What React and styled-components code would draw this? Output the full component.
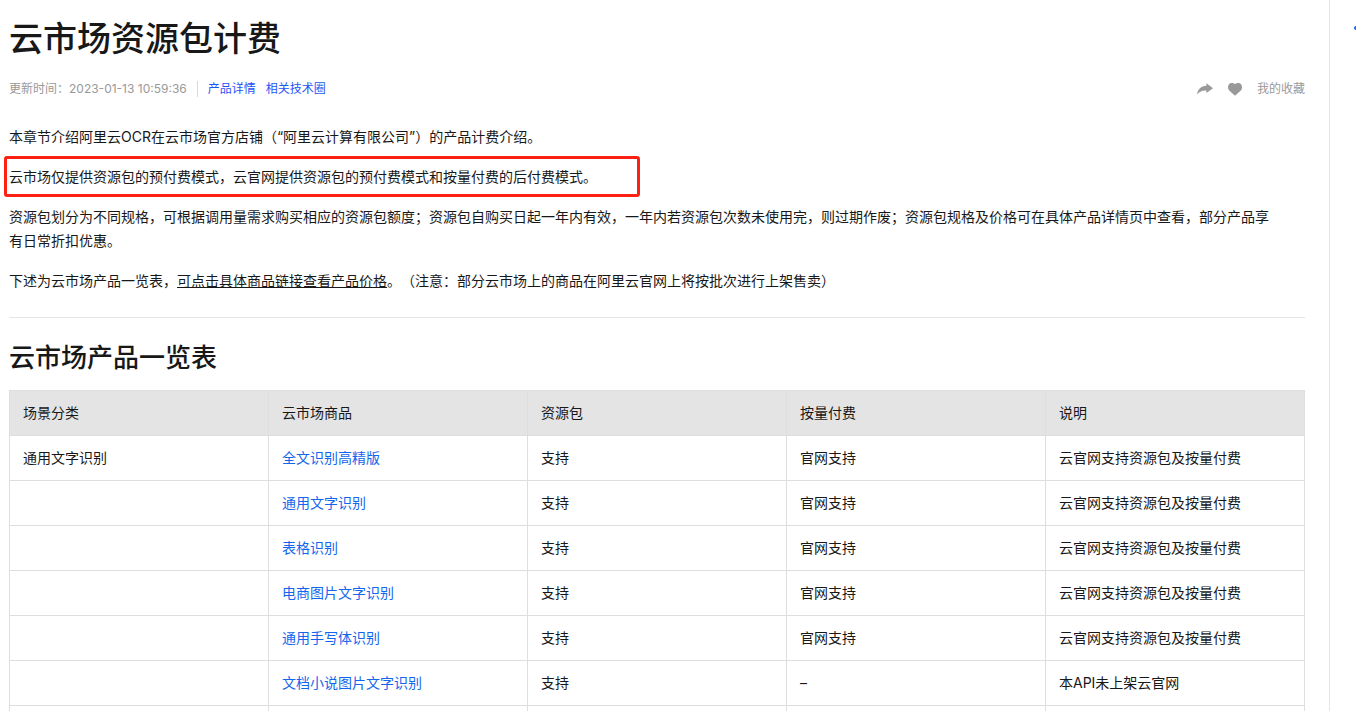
import React from "react";
import { createGlobalStyle, styled } from "styled-components";

const GlobalStyle = createGlobalStyle`
  *,
  *::after {
    box-sizing: border-box;
  }
  body {
    margin: 0;
    background-color: #fff;
    color: #181818;
    font-family: Inter, "Noto Sans CJK SC", sans-serif;
    font-size: 14px;
    line-height: 24px;
    text-spacing-trim: space-all;
  }
`;

const Page = styled.div`
  display: flex;
  height: 100vh;
  overflow: hidden;
`;

const Main = styled.main`
  flex: 1;
  min-width: 0;
  padding: 15px 24px 0 9px;
`;

const SideBar = styled.aside`
  display: flex;
  flex-shrink: 0;
  width: 27px;
  padding: 26px 0 0 24px;
  border-left: 1px solid #e5e5e5;
  overflow: hidden;
`;

const SideDot = styled.span`
  flex-shrink: 0;
  width: 4px;
  height: 4px;
  border-radius: 50%;
  background-color: #1366ec;
`;

const Title = styled.h1`
  margin: 0 0 14px;
  font-size: 34px;
  font-weight: 500;
  line-height: 48px;
`;

const MetaRow = styled.div`
  display: flex;
  justify-content: space-between;
  align-items: center;
  height: 24px;
  margin-bottom: 24px;
  color: #999;
  font-size: 12px;
`;

const MetaGroup = styled.div`
  display: flex;
  align-items: center;
  gap: ${(props) => props.$gap}px;
`;

const MetaDivider = styled.span`
  width: 1px;
  height: 16px;
  background-color: #d9d9d9;
`;

const Link = styled.a`
  color: ${(props) => props.$color || "#1366ec"};
  text-decoration: none;
`;

const IconButton = styled.button`
  display: flex;
  align-items: center;
  gap: 15px;
  padding: 0;
  border: 0;
  background: none;
  color: #999;
  font: inherit;
  cursor: pointer;
`;

const Paragraph = styled.p`
  margin: 0 0 16px;
`;

const MarkedParagraph = styled(Paragraph)`
  position: relative;
  &::after {
    content: "";
    position: absolute;
    top: -9px;
    bottom: -8px;
    left: -5px;
    width: 636px;
    border: 3px solid #ff2014;
    border-radius: 3px;
  }
`;

const Line = styled.hr`
  height: 1px;
  margin: 24px 0 20px;
  border: 0;
  background-color: #e5e5e5;
`;

const SubTitle = styled.h2`
  margin: 0 0 12px;
  font-size: 26px;
  font-weight: 500;
  line-height: 40px;
`;

const ProductTable = styled.table`
  width: 100%;
  border-collapse: collapse;
  table-layout: fixed;
  th,
  td {
    height: 45px;
    padding: 10px 13px;
    border: 1px solid #dedede;
    font-weight: 400;
    text-align: left;
  }
  th {
    background-color: #e4e4e4;
  }
`;

const columns = ["场景分类", "云市场商品", "资源包", "按量付费", "说明"];

const both = "云官网支持资源包及按量付费";

const products = [
  ["通用文字识别", "全文识别高精版", "支持", "官网支持", both],
  ["", "通用文字识别", "支持", "官网支持", both],
  ["", "表格识别", "支持", "官网支持", both],
  ["", "电商图片文字识别", "支持", "官网支持", both],
  ["", "通用手写体识别", "支持", "官网支持", both],
  ["", "文档小说图片文字识别", "支持", "–", "本API未上架云官网"],
  ["", "", "", "", ""],
];

const ShareIcon = () => (
  <svg width="16" height="12" viewBox="0 0 16 12" fill="currentColor">
    <path d="M9.4 0.2 16 5.2 9.4 10V7.4C5.4 7.2 2.4 8.2 0 11.4 0.8 6.4 4 3.2 9.4 2.8Z" />
  </svg>
);

const HeartIcon = () => (
  <svg width="14" height="13" viewBox="0 0 14 13" fill="currentColor">
    <path d="M7 12.8 1.2 7.6C-0.4 5.8-0.4 2.6 1.2 1 2.9-0.5 5.6-0.4 7 1.2 8.4-0.4 11.1-0.5 12.8 1 14.4 2.6 14.4 5.8 12.8 7.6Z" />
  </svg>
);

export default function App() {
  return (
    <>
      <GlobalStyle />
      <Page>
        <Main>
          <Title>云市场资源包计费</Title>
          <MetaRow>
            <MetaGroup $gap={10}>
              <span>更新时间：2023-01-13 10:59:36</span>
              <MetaDivider />
              <Link href="#detail" $color="#1f54f5">
                产品详情
              </Link>
              <Link href="#community" $color="#1f54f5">
                相关技术圈
              </Link>
            </MetaGroup>
            <MetaGroup $gap={15}>
              <IconButton type="button" aria-label="分享">
                <ShareIcon />
              </IconButton>
              <IconButton type="button">
                <HeartIcon />
                我的收藏
              </IconButton>
            </MetaGroup>
          </MetaRow>

          <Paragraph>
            本章节介绍阿里云OCR在云市场官方店铺（“阿里云计算有限公司”）的产品计费介绍。
          </Paragraph>
          <MarkedParagraph>
            云市场仅提供资源包的预付费模式，云官网提供资源包的预付费模式和按量付费的后付费模式。
          </MarkedParagraph>
          <Paragraph>
            资源包划分为不同规格，可根据调用量需求购买相应的资源包额度；资源包自购买日起一年内有效，一年内若资源包次数未使用完，则过期作废；资源包规格及价格可在具体产品详情页中查看，部分产品享
            <br />
            有日常折扣优惠。
          </Paragraph>
          <Paragraph>
            下述为云市场产品一览表，<u>可点击具体商品链接查看产品价格</u>
            。（注意：部分云市场上的商品在阿里云官网上将按批次进行上架售卖）
          </Paragraph>
          <Line />

          <SubTitle>云市场产品一览表</SubTitle>
          <ProductTable>
            <thead>
              <tr>
                {columns.map((name) => (
                  <th key={name}>{name}</th>
                ))}
              </tr>
            </thead>
            <tbody>
              {products.map(([scene, product, pack, payment, remark], index) => (
                <tr key={index}>
                  <td>{scene}</td>
                  <td>{product && <Link href="#product">{product}</Link>}</td>
                  <td>{pack}</td>
                  <td>{payment}</td>
                  <td>{remark}</td>
                </tr>
              ))}
            </tbody>
          </ProductTable>
        </Main>
        <SideBar>
          <SideDot />
        </SideBar>
      </Page>
    </>
  );
}
